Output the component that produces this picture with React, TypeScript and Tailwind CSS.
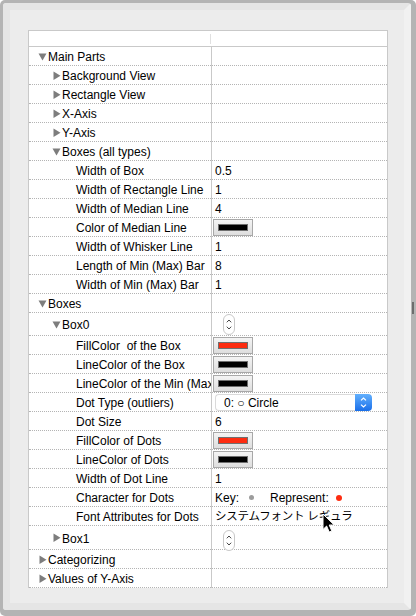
import type { ReactNode } from 'react';

type Row = {
  label: string;
  level: number;
  tri?: 'open' | 'closed';
  value?: ReactNode;
  tall?: 'box0' | 'box1';
};

const RED = '#fd2c10';

function Disclosure({ open }: { open: boolean }) {
  return open ? (
    <svg width="9" height="9" viewBox="0 0 9 9" className="shrink-0">
      <path d="M0.5 1.5h8L4.5 8.5z" fill="#7d7d7d" />
    </svg>
  ) : (
    <svg width="9" height="9" viewBox="0 0 9 9" className="shrink-0">
      <path d="M1.5 0.5v8.5l7-4.25z" fill="#7d7d7d" />
    </svg>
  );
}

function ColorWell({ color }: { color: string }) {
  return (
    <div className="ml-[1px] flex h-[17px] w-[40px] items-center border border-[#a8a8a8] bg-gradient-to-b from-[#f4f4f4] to-[#dedede] pl-[4px]">
      <div
        className="h-[7px] w-[30px] border border-[#6f6f6f]"
        style={{ backgroundColor: color }}
      />
    </div>
  );
}

function Stepper() {
  return (
    <div className="ml-[11px] flex h-[21px] w-[12px] flex-col items-center justify-center gap-[3px] rounded-[6px] border border-[#c8c8c8] bg-white">
      <svg width="6" height="4" viewBox="0 0 6 4">
        <path d="M0.8 3.3L3 1l2.2 2.3" fill="none" stroke="#444" strokeWidth="1" />
      </svg>
      <svg width="6" height="4" viewBox="0 0 6 4">
        <path d="M0.8 0.7L3 3l2.2-2.3" fill="none" stroke="#444" strokeWidth="1" />
      </svg>
    </div>
  );
}

function Popup() {
  return (
    <div className="flex h-[17px] w-[157px]">
      <div className="flex flex-1 items-center rounded-l-[4px] border-y border-l border-[#dadada] bg-white pl-[8px] pt-[1px] text-[12px] text-black">
        0: ○ Circle
      </div>
      <div className="flex w-[17px] flex-col items-center justify-center gap-[3px] rounded-r-[4px] bg-gradient-to-b from-[#62b0fd] to-[#186ee9]">
        <svg width="7" height="4" viewBox="0 0 7 4">
          <path d="M1 3.4L3.5 1 6 3.4" fill="none" stroke="#fff" strokeWidth="1.2" />
        </svg>
        <svg width="7" height="4" viewBox="0 0 7 4">
          <path d="M1 0.6L3.5 3 6 0.6" fill="none" stroke="#fff" strokeWidth="1.2" />
        </svg>
      </div>
    </div>
  );
}

function KeyRepresent() {
  return (
    <div className="flex items-center pl-[3px] pt-[1px] text-[12px] text-black">
      <span>Key:</span>
      <span className="ml-[10px] h-[5px] w-[5px] rounded-full bg-[#9c9c9c]" />
      <span className="ml-[16px]">Represent:</span>
      <span className="ml-[7px] h-[6px] w-[6px] rounded-full" style={{ backgroundColor: RED }} />
    </div>
  );
}

const txt = (s: string) => <span className="pl-[3px] pt-[2px] text-[12px] text-black">{s}</span>;

const rows: Row[] = [
  { label: 'Main Parts', level: 0, tri: 'open' },
  { label: 'Background View', level: 1, tri: 'closed' },
  { label: 'Rectangle View', level: 1, tri: 'closed' },
  { label: 'X-Axis', level: 1, tri: 'closed' },
  { label: 'Y-Axis', level: 1, tri: 'closed' },
  { label: 'Boxes (all types)', level: 1, tri: 'open' },
  { label: 'Width of Box', level: 2, value: txt('0.5') },
  { label: 'Width of Rectangle Line', level: 2, value: txt('1') },
  { label: 'Width of Median Line', level: 2, value: txt('4') },
  { label: 'Color of Median Line', level: 2, value: <ColorWell color="#000" /> },
  { label: 'Width of Whisker Line', level: 2, value: txt('1') },
  { label: 'Length of Min (Max) Bar', level: 2, value: txt('8') },
  { label: 'Width of Min (Max) Bar', level: 2, value: txt('1') },
  { label: 'Boxes', level: 0, tri: 'open' },
  { label: 'Box0', level: 1, tri: 'open', value: <Stepper />, tall: 'box0' },
  { label: 'FillColor  of the Box', level: 2, value: <ColorWell color={RED} /> },
  { label: 'LineColor of the Box', level: 2, value: <ColorWell color="#000" /> },
  { label: 'LineColor of the Min (Max) Bar', level: 2, value: <ColorWell color="#000" /> },
  { label: 'Dot Type (outliers)', level: 2, value: <div className="pl-[3px]"><Popup /></div> },
  { label: 'Dot Size', level: 2, value: txt('6') },
  { label: 'FillColor of Dots', level: 2, value: <ColorWell color={RED} /> },
  { label: 'LineColor of Dots', level: 2, value: <ColorWell color="#000" /> },
  { label: 'Width of Dot Line', level: 2, value: txt('1') },
  { label: 'Character for Dots', level: 2, value: <KeyRepresent /> },
  {
    label: 'Font Attributes for Dots',
    level: 2,
    value: (
      <span className="pl-[3px] pt-[1px] text-[11.5px] tracking-[-0.2px] text-black">
        システムフォント レギュラ
      </span>
    ),
  },
  { label: 'Box1', level: 1, tri: 'closed', value: <div className="pt-[4px]"><Stepper /></div>, tall: 'box1' },
  { label: 'Categorizing', level: 0, tri: 'closed' },
  { label: 'Values of Y-Axis', level: 0, tri: 'closed' },
];

const indent = ['pl-[9px]', 'pl-[23px]', 'pl-[37px]'];

function TableRow({ row }: { row: Row }) {
  const height = row.tall === 'box0' ? 'h-[23px]' : row.tall === 'box1' ? 'h-[24px]' : 'h-[19px]';
  return (
    <div className={`flex ${height}`}>
      <div
        className={`flex w-[182px] items-center gap-[1px] overflow-hidden whitespace-pre border-b border-dotted border-[#b4b4b4] ${indent[row.level]}`}>
        {row.tri ? <Disclosure open={row.tri === 'open'} /> : <span className="w-[9px] shrink-0" />}
        <span className="pt-[2px] text-[12px] text-black">{row.label}</span>
      </div>
      <div className="w-px bg-[#c9c9c9]" />
      <div
        className={`flex flex-1 border-b border-dotted border-[#b4b4b4] ${
          row.tall === 'box1' ? 'items-start' : 'items-center'
        }`}>
        {row.value}
      </div>
    </div>
  );
}

export default function App() {
  return (
    <div className="relative h-[616px] w-[416px] rounded-[5px] bg-[#b4b4b4] pb-[6px] pl-[3px] pr-[5px] pt-[3px] font-['Liberation_Sans','Noto_Sans_CJK_JP',sans-serif]">
      <div className="flex h-full rounded-[3px] border-[7px] border-[#e5e5e5] border-r-[#f1f1f1]">
        <div className="flex-1 bg-[#ececec] pl-[18px] pr-[16px] pt-[20px]">
          <div className="border-x border-t border-[#c9c9c9] bg-white">
            <div className="flex h-[16px] border-b border-[#c9c9c9]">
              <div className="flex w-[182px] items-center justify-end">
                <div className="h-[10px] w-px bg-[#e0e0e0]" />
              </div>
              <div className="w-px" />
              <div className="flex-1" />
            </div>
            {rows.map(row => (
              <TableRow key={row.label} row={row} />
            ))}
          </div>
        </div>
      </div>

      {/* split view handle */}
      <div className="absolute left-[412px] top-[302px] h-[12px] w-[2px] bg-[#6d6d6d]" />

      {/* mouse pointer */}
      <svg
        className="absolute left-[322px] top-[513px]"
        width="13"
        height="20"
        viewBox="0 0 13 20">
        <path
          d="M1 1v15.5l3.6-3.5 2.6 6 2.6-1.1-2.6-5.9h5z"
          fill="#000"
          stroke="#fff"
          strokeWidth="1"
          strokeLinejoin="round"
        />
      </svg>
    </div>
  );
}
